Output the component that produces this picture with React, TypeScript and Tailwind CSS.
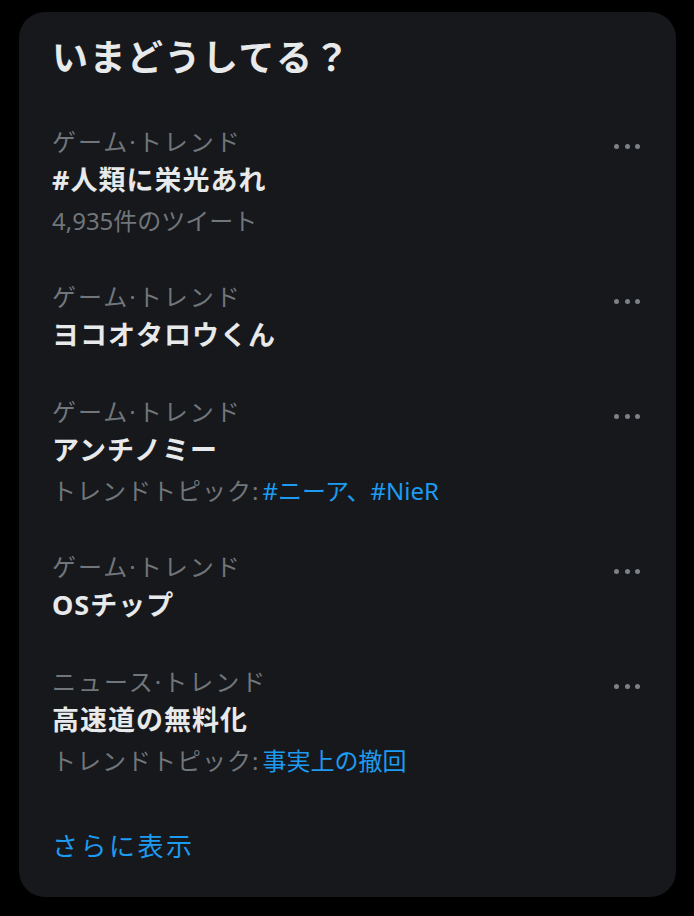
import React from "react";

type Trend = {
  category: string;
  name: string;
  sub?: { label: string; links?: string; count?: string };
};

const trends: Trend[] = [
  { category: "ゲーム·トレンド", name: "#人類に栄光あれ", sub: { label: "", count: "4,935件のツイート" } },
  { category: "ゲーム·トレンド", name: "ヨコオタロウくん" },
  { category: "ゲーム·トレンド", name: "アンチノミー", sub: { label: "トレンドトピック:", links: "#ニーア、#NieR" } },
  { category: "ゲーム·トレンド", name: "OSチップ" },
  { category: "ニュース·トレンド", name: "高速道の無料化", sub: { label: "トレンドトピック:", links: "事実上の撤回" } },
];

const font = { fontFamily: '"Noto Sans", "Noto Sans CJK JP", sans-serif' };

function Dots() {
  return (
    <div className="flex self-start items-center gap-[5.5px] mr-[3px] mt-[18px]">
      <span className="block w-[5px] h-[5px] rounded-full bg-[#7d8185]" />
      <span className="block w-[5px] h-[5px] rounded-full bg-[#7d8185]" />
      <span className="block w-[5px] h-[5px] rounded-full bg-[#7d8185]" />
    </div>
  );
}

export default function App() {
  return (
    <div className="min-h-[916px] w-full bg-black pt-[12px] pl-[19px] pr-[18px]" style={font}>
      <div className="h-[885px] rounded-[26px] bg-[#16181c] px-[33px] pt-[22px]">
        <h2 className="text-[36px] leading-[48px] font-bold tracking-[1.5px] text-[#e7e9ea]">
          いまどうしてる？
        </h2>
        <div className="mt-[24px]">
          {trends.map((t, i) => (
            <div key={i} className="flex justify-between items-start py-[20px]">
              <div className="flex flex-col">
                <div className="text-[24px] leading-[32px] tracking-[2px] text-[#71767b]">
                  {t.category}
                </div>
                <div className="text-[27px] leading-[43px] font-bold tracking-[1px] text-[#e7e9ea]">
                  {t.name}
                </div>
                {t.sub && (
                  <div className="text-[24px] leading-[40px] tracking-[1px] text-[#71767b]">
                    {t.sub.count ? (
                      <span className="tracking-[0px]">{t.sub.count}</span>
                    ) : (
                      <>
                        <span>{t.sub.label}</span>
                        <span className="ml-[3px] tracking-[0px] text-[#1d9bf0]">{t.sub.links}</span>
                      </>
                    )}
                  </div>
                )}
              </div>
              <Dots />
            </div>
          ))}
        </div>
        <div className="mt-[25px] text-[26px] leading-[40px] tracking-[2.5px] text-[#1d9bf0]">
          さらに表示
        </div>
      </div>
    </div>
  );
}
